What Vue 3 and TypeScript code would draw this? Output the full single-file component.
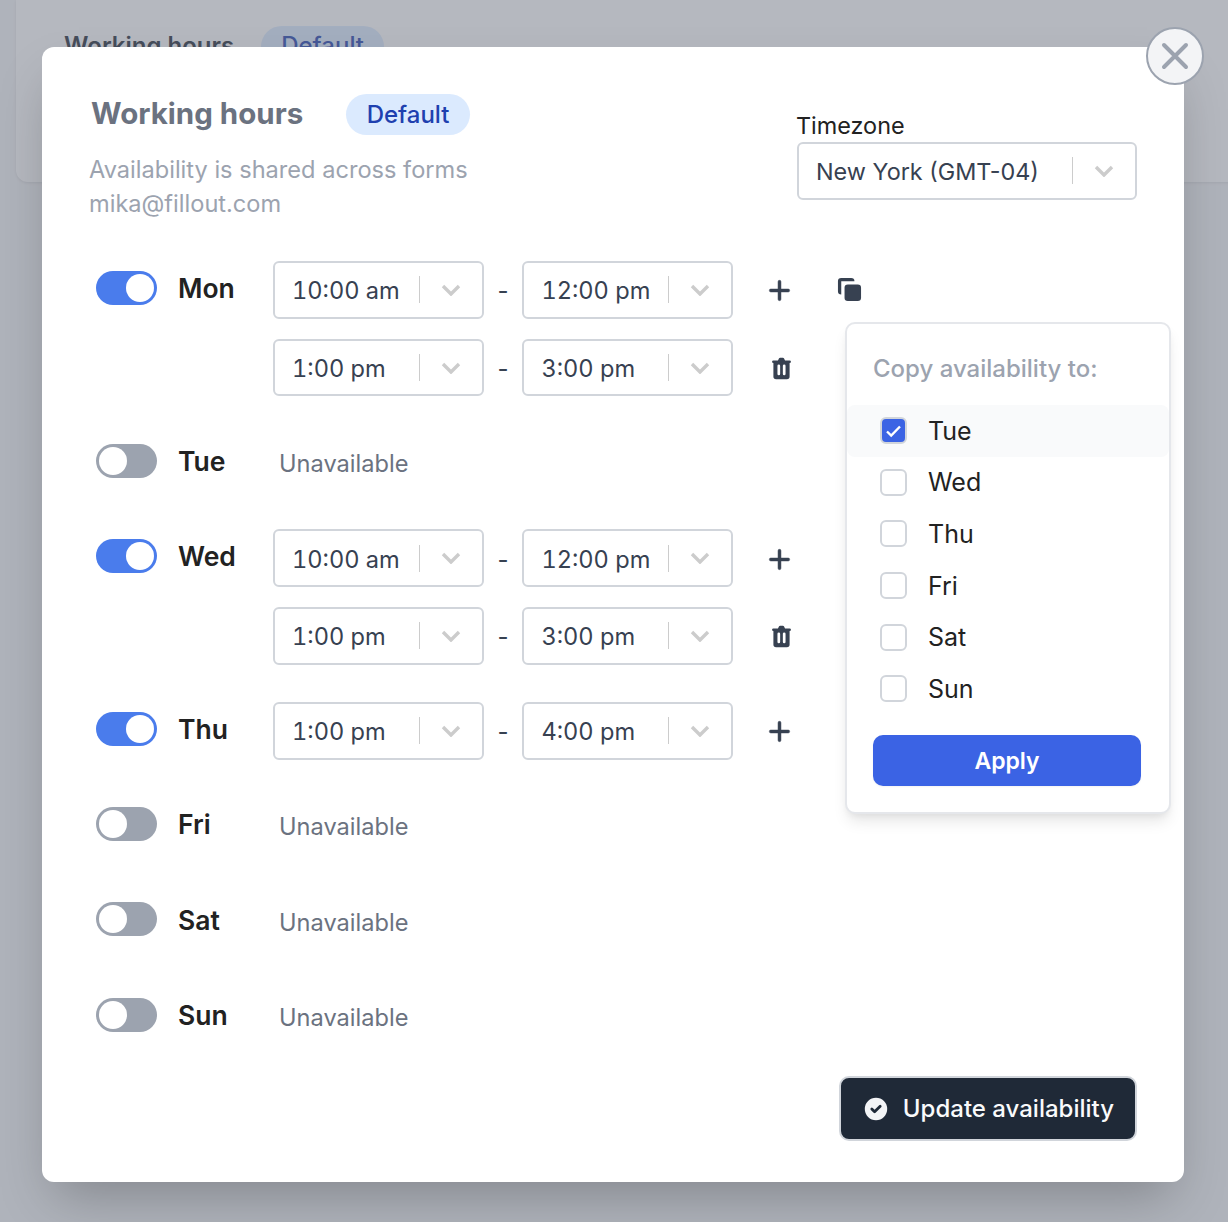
<script setup lang="ts">
import { ref } from 'vue'

interface DayRow {
  name: string
  enabled: boolean
  ranges: [string, string][]
}

const days: DayRow[] = [
  { name: 'Mon', enabled: true, ranges: [['10:00 am', '12:00 pm'], ['1:00 pm', '3:00 pm']] },
  { name: 'Tue', enabled: false, ranges: [] },
  { name: 'Wed', enabled: true, ranges: [['10:00 am', '12:00 pm'], ['1:00 pm', '3:00 pm']] },
  { name: 'Thu', enabled: true, ranges: [['1:00 pm', '4:00 pm']] },
  { name: 'Fri', enabled: false, ranges: [] },
  { name: 'Sat', enabled: false, ranges: [] },
  { name: 'Sun', enabled: false, ranges: [] }
]

const copyTargets = ref(['Tue', 'Wed', 'Thu', 'Fri', 'Sat', 'Sun'])
const checked = ref<string[]>(['Tue'])
</script>

<template>
  <div class="page">
    <div class="back-card">
      <span class="back-title">Working hours</span>
      <span class="back-badge">Default</span>
    </div>

    <div class="overlay">
      <div class="modal">
        <button class="close-btn" type="button" aria-label="Close">
          <svg width="28" height="28" viewBox="0 0 28 28" fill="none">
            <path d="M3 3l22 22M25 3L3 25" stroke="#9ca3af" stroke-width="4" stroke-linecap="round" />
          </svg>
        </button>

        <header class="head">
          <div class="head-left">
            <div class="title-row">
              <h1 class="title">Working hours</h1>
              <span class="badge">Default</span>
            </div>
            <p class="sub">Availability is shared across forms</p>
            <p class="sub">mika@fillout.com</p>
          </div>
          <div class="zone">
            <div class="zone-label">Timezone</div>
            <div class="select">
              <span class="select-value">New York (GMT-04)</span>
              <span class="select-sep"></span>
              <svg class="chev" width="20" height="12" viewBox="0 0 20 12" fill="none">
                <path d="M2 2l8 8 8-8" stroke="#cccccc" stroke-width="3.4" />
              </svg>
            </div>
          </div>
        </header>

        <div class="days">
          <div v-for="day in days" :key="day.name" class="day">
            <span class="toggle" :class="{ on: day.enabled }"><span class="knob"></span></span>
            <span class="day-name">{{ day.name }}</span>

            <div v-if="day.enabled" class="ranges">
              <div v-for="(range, i) in day.ranges" :key="i" class="range">
                <div class="select time">
                  <span class="select-value">{{ range[0] }}</span>
                  <span class="select-sep"></span>
                  <svg class="chev" width="20" height="12" viewBox="0 0 20 12" fill="none">
                    <path d="M2 2l8 8 8-8" stroke="#cccccc" stroke-width="3.4" />
                  </svg>
                </div>
                <span class="dash">-</span>
                <div class="select time">
                  <span class="select-value">{{ range[1] }}</span>
                  <span class="select-sep"></span>
                  <svg class="chev" width="20" height="12" viewBox="0 0 20 12" fill="none">
                    <path d="M2 2l8 8 8-8" stroke="#cccccc" stroke-width="3.4" />
                  </svg>
                </div>
                <span class="action" :class="{ trash: i > 0 }">
                  <svg v-if="i === 0" width="29" height="29" viewBox="0 0 20 20" fill="#374151" stroke="#374151" stroke-width="0.35">
                    <path fill-rule="evenodd" clip-rule="evenodd" d="M10 3a1 1 0 011 1v5h5a1 1 0 110 2h-5v5a1 1 0 11-2 0v-5H4a1 1 0 110-2h5V4a1 1 0 011-1z" />
                  </svg>
                  <svg v-else width="27" height="27" viewBox="0 0 20 20" fill="#374151">
                    <path fill-rule="evenodd" clip-rule="evenodd" d="M9 2a1 1 0 00-.894.553L7.382 4H4a1 1 0 000 2v10a2 2 0 002 2h8a2 2 0 002-2V6a1 1 0 100-2h-3.382l-.724-1.447A1 1 0 0011 2H9zM7 8a1 1 0 012 0v6a1 1 0 11-2 0V8zm5-1a1 1 0 00-1 1v6a1 1 0 102 0V8a1 1 0 00-1-1z" />
                  </svg>
                </span>
                <span v-if="day.name === 'Mon' && i === 0" class="copy">
                  <svg width="33" height="33" viewBox="0 0 20 20" fill="#374151">
                    <path d="M7 9a2 2 0 012-2h6a2 2 0 012 2v6a2 2 0 01-2 2H9a2 2 0 01-2-2V9z" />
                    <path d="M5 3a2 2 0 00-2 2v6a2 2 0 002 2V5h8a2 2 0 00-2-2H5z" />
                  </svg>
                </span>
              </div>
            </div>
            <div v-else class="unavailable">Unavailable</div>
          </div>
        </div>

        <footer class="foot">
          <button class="update-btn" type="button">
            <svg width="28" height="28" viewBox="0 0 20 20" fill="#f3f4f6">
              <path fill-rule="evenodd" clip-rule="evenodd" d="M10 18a8 8 0 100-16 8 8 0 000 16zm3.707-9.293a1 1 0 00-1.414-1.414L9 10.586 7.707 9.293a1 1 0 00-1.414 1.414l2 2a1 1 0 001.414 0l4-4z" />
            </svg>
            Update availability
          </button>
        </footer>

        <div class="popover">
          <div class="pop-title">Copy availability to:</div>
          <div
            v-for="(target, i) in copyTargets"
            :key="target"
            class="pop-item"
            :class="{ hover: i === 0 }"
          >
            <span class="check" :class="{ checked: checked.includes(target) }">
              <svg v-if="checked.includes(target)" width="17" height="14" viewBox="0 0 17 14" fill="none">
                <path d="M2 7.5l4.2 4L15 2.5" stroke="#fff" stroke-width="2.4" />
              </svg>
            </span>
            <span>{{ target }}</span>
          </div>
          <button class="apply" type="button">Apply</button>
        </div>
      </div>
    </div>
  </div>
</template>

<style>
html,
body {
  margin: 0;
  padding: 0;
}
</style>

<style scoped>
.page {
  position: relative;
  height: 1222px;
  overflow: hidden;
  background: #f3f4f6;
  font-family: Inter, 'Noto Sans', sans-serif;
}

.back-card {
  height: 182px;
  margin: 0 -20px 0 16px;
  box-sizing: border-box;
  padding-top: 26px;
  padding-left: 48px;
  display: flex;
  align-items: flex-start;
  background: #fff;
  border-radius: 0 0 12px 12px;
  box-shadow: 0 1px 3px rgba(0, 0, 0, 0.1);
}

.back-title {
  margin-top: 5px;
  font-size: 24px;
  font-weight: 600;
  color: #1f2937;
}

.back-badge {
  margin-left: 27px;
  padding: 5px 20px;
  height: 41px;
  box-sizing: border-box;
  border-radius: 21px;
  background: #dbeafe;
  color: #1e40af;
  font-size: 24px;
  font-weight: 500;
}

.overlay {
  position: absolute;
  inset: 0;
  padding: 47px 44px 40px 42px;
  background: rgba(107, 114, 128, 0.5);
}

.modal {
  position: relative;
  height: 1135px;
  box-sizing: border-box;
  padding: 0 47px 0 48px;
  background: #fff;
  border-radius: 12px;
  box-shadow: 0 25px 50px -12px rgba(0, 0, 0, 0.25);
}

.close-btn {
  position: absolute;
  top: -20px;
  right: -20px;
  width: 58px;
  height: 58px;
  display: flex;
  align-items: center;
  justify-content: center;
  padding: 0;
  border: 2px solid #9ca3af;
  border-radius: 50%;
  background: #f3f4f6;
}

.head {
  display: flex;
  justify-content: space-between;
  height: 214px;
  padding-top: 47px;
  box-sizing: border-box;
}

.title-row {
  display: flex;
  align-items: center;
  height: 41px;
  margin-bottom: 18px;
  margin-left: 1px;
}

.title {
  margin: -3px 0 0;
  font-size: 29.5px;
  font-weight: 700;
  color: #6b7280;
}

.badge {
  margin-left: 43px;
  padding: 0 20.5px;
  line-height: 41px;
  border-radius: 21px;
  background: #dbeafe;
  color: #1e40af;
  font-size: 24px;
  font-weight: 500;
}

.sub {
  margin: 0 0 0 -1px;
  font-size: 23.6px;
  line-height: 34.4px;
  color: #9ca3af;
}

.zone {
  width: 340px;
  padding-top: 17px;
}

.zone-label {
  font-size: 23.4px;
  line-height: 29px;
  color: #222;
  margin-bottom: 2px;
  margin-left: -1px;
}

.select {
  display: flex;
  align-items: center;
  height: 57.6px;
  box-sizing: border-box;
  padding-left: 17px;
  border: 2px solid #d1d5db;
  border-radius: 6px;
  background: #fff;
  font-size: 23.4px;
  color: #374151;
}

.select-value {
  flex: 1;
  white-space: nowrap;
  padding-top: 2px;
}

.select-sep {
  width: 1.5px;
  height: 27px;
  background: #cccccc;
}

.chev {
  margin: 0 20.6px 0 21px;
}

.days {
  display: flex;
  flex-direction: column;
  gap: 37.4px;
}

.day {
  display: flex;
  align-items: flex-start;
  min-height: 57.6px;
  margin-left: 6px;
}

.toggle {
  position: relative;
  flex: none;
  width: 61px;
  height: 34px;
  margin-top: 9.8px;
  box-sizing: border-box;
  border-radius: 17px;
  background: #9ca3af;
}

.toggle.on {
  background: #4a7cec;
}

.knob {
  position: absolute;
  top: 3px;
  left: 3px;
  width: 28px;
  height: 28px;
  border-radius: 50%;
  background: #fff;
}

.toggle.on .knob {
  left: 30px;
}

.day-name {
  flex: none;
  width: 95px;
  margin-left: 21px;
  margin-top: 9px;
  font-size: 26.5px;
  line-height: 36px;
  font-weight: 600;
  color: #222;
}

.ranges {
  display: flex;
  flex-direction: column;
  gap: 20.2px;
}

.range {
  display: flex;
  align-items: center;
}

.time {
  width: 210.6px;
  font-size: 23.6px;
  font-variant-numeric: tabular-nums;
}

.dash {
  width: 38.8px;
  padding-top: 2px;
  text-align: center;
  font-size: 24px;
  color: #374151;
}

.action {
  display: flex;
  align-items: center;
  justify-content: center;
  width: 40px;
  margin-left: 26.6px;
  padding-top: 2px;
}

.action.trash {
  padding-left: 2px;
  box-sizing: content-box;
  margin-right: -2px;
}

.copy {
  display: flex;
  align-items: center;
  justify-content: center;
  width: 40px;
  margin-left: 30px;
  margin-top: -1px;
}

.unavailable {
  margin-left: 6px;
  height: 58.2px;
  font-size: 23.6px;
  line-height: 59.6px;
  color: #6b7280;
}

.foot {
  position: absolute;
  right: 47px;
  bottom: 41px;
}

.update-btn {
  display: flex;
  align-items: center;
  gap: 13px;
  height: 65px;
  box-sizing: border-box;
  padding: 0 21px;
  border: 2px solid #d1d5db;
  border-radius: 10px;
  background: #1f2937;
  color: #f9fafb;
  font-family: inherit;
  font-size: 24px;
  font-weight: 500;
}

.popover {
  position: absolute;
  top: 275px;
  left: 803px;
  width: 326px;
  height: 492px;
  box-sizing: border-box;
  background: #fff;
  border: 2px solid #e5e7eb;
  border-radius: 10px;
  box-shadow: 0 10px 15px -3px rgba(0, 0, 0, 0.1), 0 4px 6px -2px rgba(0, 0, 0, 0.05);
}

.pop-title {
  margin: 0 0 0 26px;
  height: 81px;
  line-height: 90px;
  font-size: 24px;
  font-weight: 500;
  color: #9ca3af;
}

.pop-item {
  display: flex;
  align-items: center;
  height: 51.6px;
  padding-left: 33px;
  font-size: 25px;
  color: #222;
  border-radius: 8px;
}

.pop-item.hover {
  background: #f9fafb;
}

.check {
  display: flex;
  align-items: center;
  justify-content: center;
  width: 27px;
  height: 27px;
  box-sizing: border-box;
  margin-right: 21px;
  border: 2px solid #d1d5db;
  border-radius: 6px;
  background: #fff;
}

.check.checked {
  background: #3b63e4;
}

.apply {
  display: block;
  width: 268px;
  height: 51px;
  margin: 20px 0 0 26px;
  padding: 1px 0 0;
  border: none;
  border-radius: 10px;
  background: #3b63e4;
  color: #fff;
  font-family: inherit;
  font-size: 23px;
  font-weight: 600;
  box-shadow: 0 1px 2px rgba(0, 0, 0, 0.05);
}
</style>
